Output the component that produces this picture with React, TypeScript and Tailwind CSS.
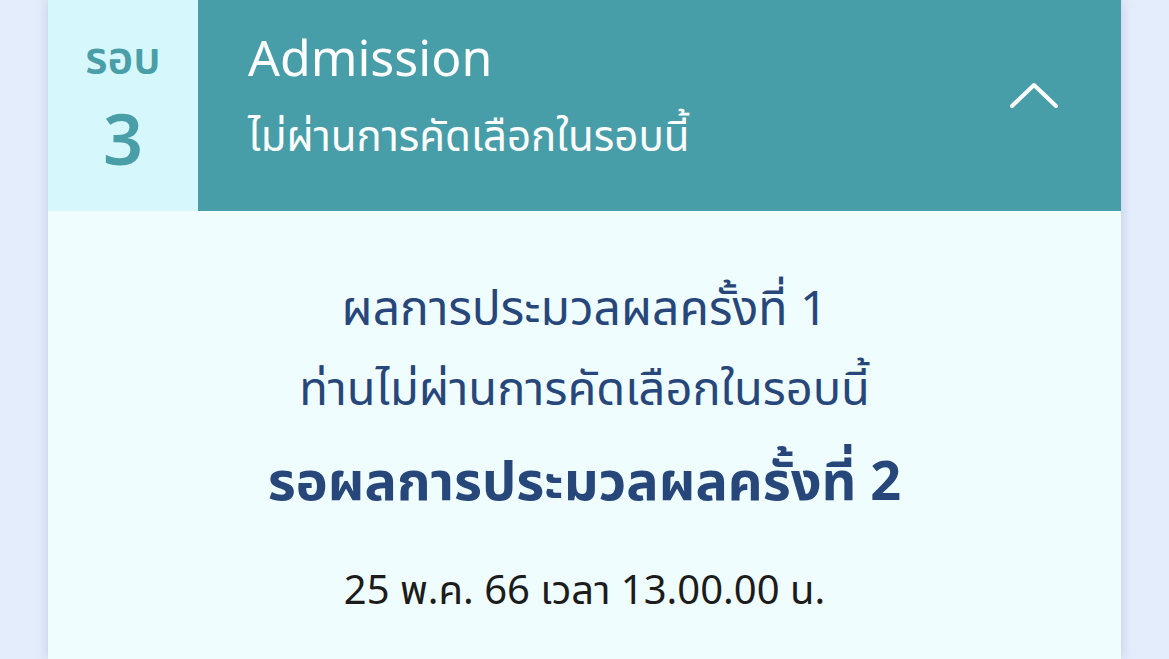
const thai = "font-['Noto_Sans_Thai','Noto_Sans','Noto_Sans_CJK_SC',sans-serif]";

function ChevronUp() {
  return (
    <svg width="50" height="30" viewBox="0 0 50 30" fill="none" stroke="currentColor" strokeWidth="4">
      <path d="M3 25L25 4l22 21" strokeLinecap="round" strokeLinejoin="round" />
    </svg>
  );
}

export default function App() {
  return (
    <div className={`min-h-screen bg-[#e4edfc] px-12 ${thai}`}>
      <section className="h-[659px] bg-[#effdfe] shadow-[0_0_12px_rgba(120,140,180,0.35)] flex flex-col">

        {/* ── Round header ── */}
        <header className="flex h-[211px]">
          <div className="w-[150px] bg-[#d6f7fb] flex flex-col items-center pt-[33px] text-[#4a9ea8] font-semibold">
            <span className="text-[44px] leading-[54px]">รอบ</span>
            <span className="text-[70px] leading-[70px] mt-[22px]">3</span>
          </div>
          <div className="flex-1 bg-[#489ea8] text-white flex items-start justify-between pl-[50px] pr-[62px]">
            <div className="flex flex-col pt-[30px]">
              <span className="text-[50px] leading-[62px]">Admission</span>
              <span className="text-[42px] leading-[56px] mt-[18px]">ไม่ผ่านการคัดเลือกในรอบนี้</span>
            </div>
            <div className="pt-[81px]">
              <ChevronUp />
            </div>
          </div>
        </header>

        {/* ── Result body ── */}
        <div className="flex flex-col items-center pt-[72px] text-center">
          <p className="text-[48px] leading-[56px] text-[#27477a]">ผลการประมวลผลครั้งที่ 1</p>
          <p className="text-[47px] leading-[56px] text-[#27477a] mt-[24px]">ท่านไม่ผ่านการคัดเลือกในรอบนี้</p>
          <p className="text-[54px] leading-[70px] font-bold text-[#27477a] mt-[30px]">รอผลการประมวลผลครั้งที่ 2</p>
          <p className="text-[40px] leading-[50px] text-[#1c1c1c] mt-[48px]">25 พ.ค. 66 เวลา 13.00.00 น.</p>
        </div>
      </section>
    </div>
  );
}
